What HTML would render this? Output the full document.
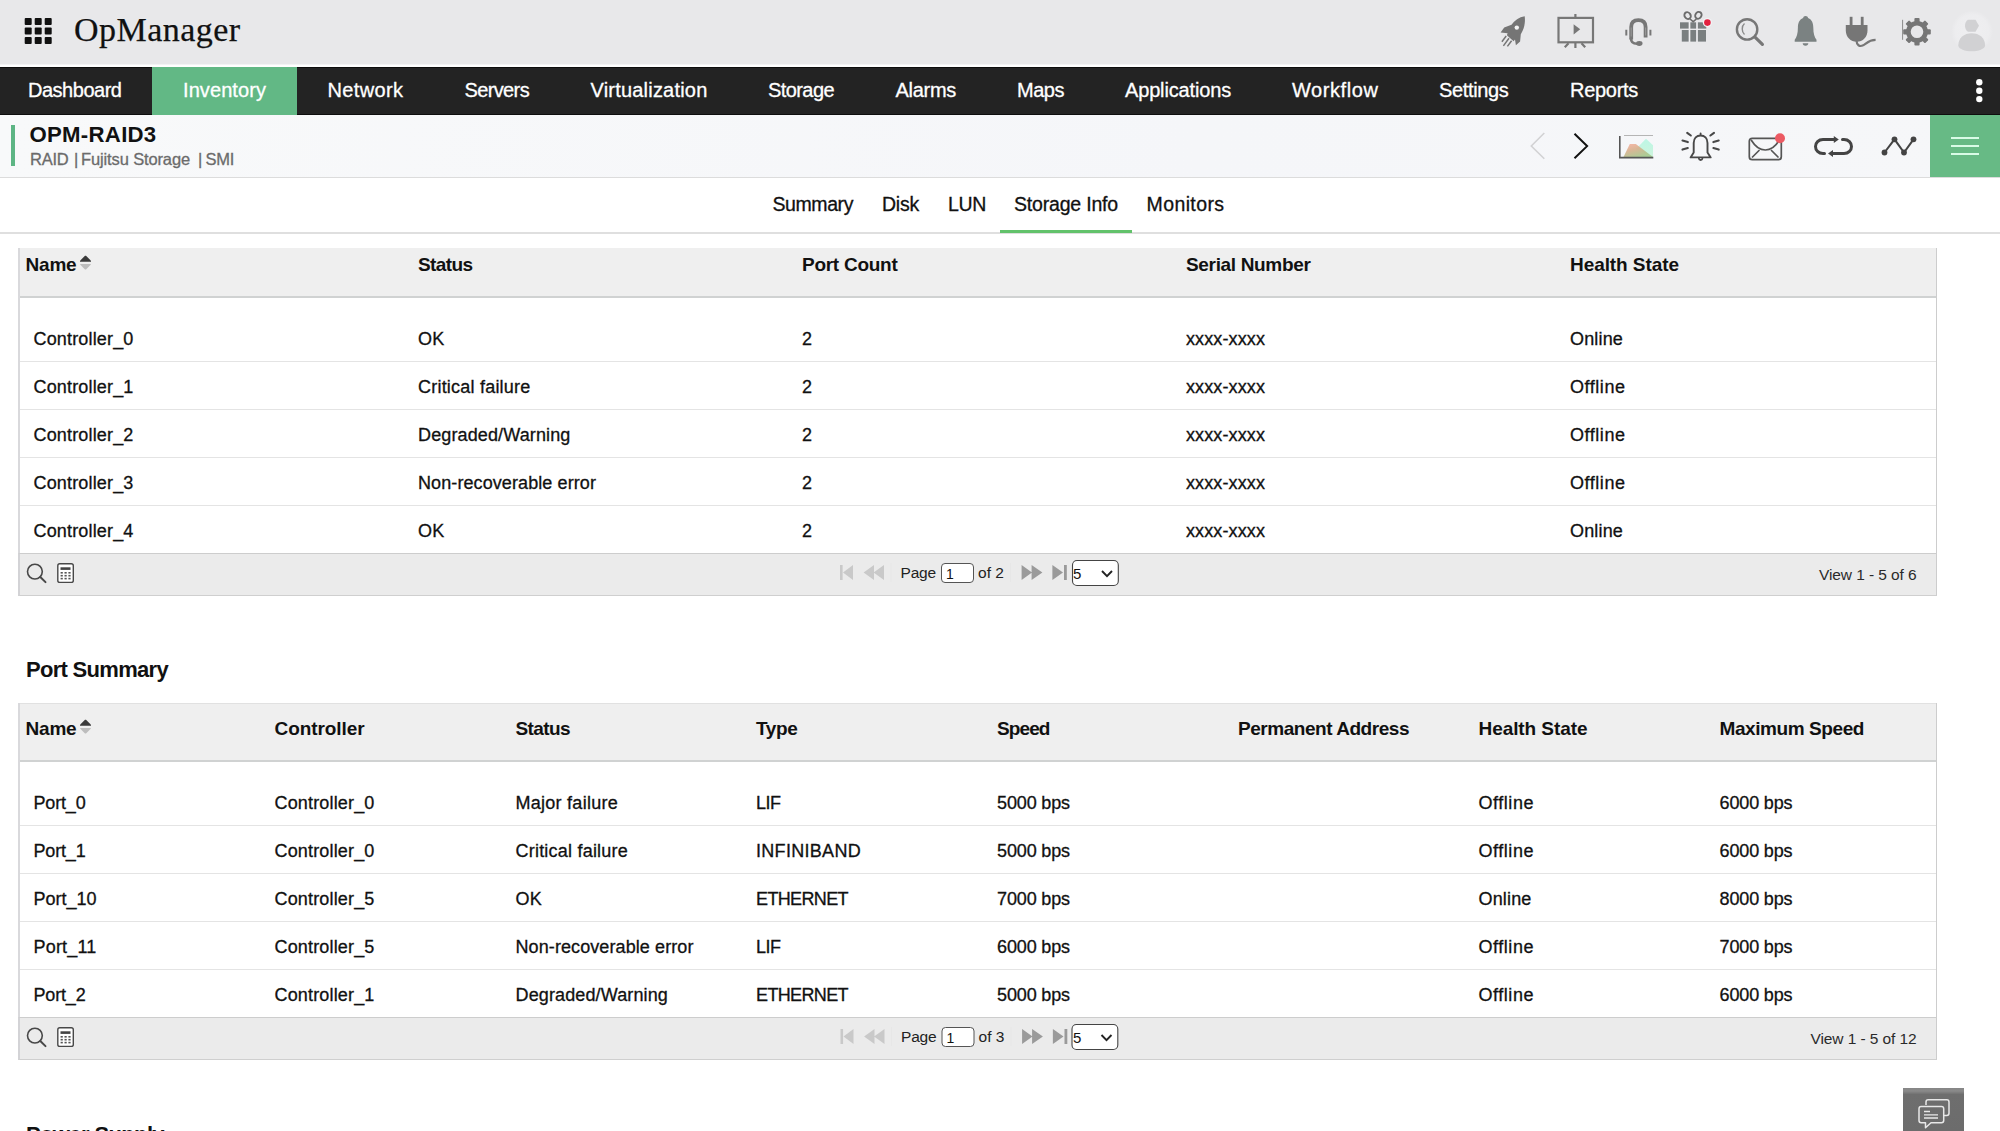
<!DOCTYPE html>
<html lang="en"><head><meta charset="utf-8"><title>OpManager</title>
<style>
*{box-sizing:border-box;margin:0;padding:0}
html,body{width:2000px;height:1131px;overflow:hidden;background:#fff;font-family:"Liberation Sans",sans-serif}
.a{position:absolute}
.t{position:absolute;white-space:nowrap;display:block}
svg{position:absolute;overflow:visible}
#topbar{left:0;top:0;width:2000px;height:67px;background:linear-gradient(#e8e8ea 0,#e8e8ea 64px,#f4f4f5 64.500px,#fff 65px,#fff 67px)}
#nav{left:0;top:67px;width:2000px;height:47.800px;background:#232323;border-top:1.200px solid #0e0e0e;border-bottom:1.200px solid #0e0e0e}
#navsel{left:152px;top:67px;width:145px;height:47.800px;background:#62b885}
#sub{left:0;top:115px;width:2000px;height:62px;background:linear-gradient(90deg,#f8f9fa,#f5f6f9 60%,#f6f7f9)}
#subline{left:0;top:177px;width:2000px;height:1px;background:#dcdcdc}
#gbar{left:11px;top:125px;width:4px;height:41px;background:#5db584}
#menu{left:1930px;top:115px;width:70px;height:62px;background:#67ba85}
.hl{left:1951px;width:28px;height:2px;background:#d9fbe6}
#tabline{left:0;top:232px;width:2000px;height:2px;background:#dfdfdf}
#tabsel{left:1000px;top:230px;width:132px;height:3px;background:#62c26b}
.tbl{left:18px;width:1919px;border-left:2px solid #d9d9dc;border-right:1px solid #cdcdcd}
.th{left:20px;width:1916px;background:#efefef}
.thb{left:20px;width:1916px;height:2px;background:#d0d2d2}
.rl{left:20px;width:1916px;height:1px;background:#e4e4e4}
.ft{left:18px;width:1919px;height:43px;background:#ebebeb;border-top:1.5px solid #cdcdcd;border-bottom:1.5px solid #cfcfcf;border-left:2px solid #d3d3d6;border-right:1px solid #cdcdcd}
.pin{width:33px;height:19px;border:1px solid #555;border-radius:4px;background:#fff}
.psel{width:46px;height:26px;border:1px solid #444;border-radius:5px;background:#fff}
#chat{left:1903.200px;top:1088.300px;width:61.200px;height:43px;background:linear-gradient(#868686 0,#8a8a8a 3px,#6e6e6e 6.500px,#6c6c6c 100%)}

</style></head>
<body>
<div class="a" id="topbar"></div>
<div class="a" id="nav"></div>
<div class="a" id="navsel"></div>
<div class="a" id="sub"></div>
<div class="a" id="subline"></div>
<div class="a" id="gbar"></div>
<div class="a" id="menu"></div>
<div class="a hl" style="top:137px"></div><div class="a hl" style="top:145px"></div><div class="a hl" style="top:153px"></div>
<div class="a" id="tabline"></div>
<div class="a" id="tabsel"></div>
<!-- table 1 -->
<div class="a tbl" style="top:248px;height:306px"></div>
<div class="a th" style="top:248px;height:48px"></div>
<div class="a thb" style="top:296px"></div>
<div class="a rl" style="top:361px"></div><div class="a rl" style="top:409px"></div><div class="a rl" style="top:457px"></div><div class="a rl" style="top:505px"></div>
<div class="a ft" style="top:553px"></div>
<!-- table 2 -->
<div class="a tbl" style="top:703px;height:315px"></div>
<div class="a th" style="top:703px;height:57px;border-top:1.500px solid #e1e1e1"></div>
<div class="a thb" style="top:760px"></div>
<div class="a rl" style="top:825px"></div><div class="a rl" style="top:873px"></div><div class="a rl" style="top:921px"></div><div class="a rl" style="top:969px"></div>
<div class="a ft" style="top:1017px"></div>
<div class="a" id="chat"></div>
<svg class="a" style="left:0;top:0" width="2000" height="1131" viewBox="0 0 2000 1131" fill="none">
<defs>
<linearGradient id="gr" x1="0" y1="0" x2="0.6" y2="1"><stop offset="0" stop-color="#f9b3a4"/><stop offset="0.45" stop-color="#d9b08e"/><stop offset="1" stop-color="#a3c98c"/></linearGradient>
<linearGradient id="gg" x1="0" y1="0" x2="0" y2="1"><stop offset="0" stop-color="#aef6e0"/><stop offset="1" stop-color="#c4f3d6"/></linearGradient>
<radialGradient id="avg"><stop offset="0" stop-color="#efeff1"/><stop offset="0.8" stop-color="#ededef"/><stop offset="1" stop-color="#e8e8ea"/></radialGradient>
</defs>
<!-- app grid -->
<g fill="#111">
<rect x="24.7" y="18" width="7" height="7" rx="1"/><rect x="34.7" y="18" width="7" height="7" rx="1"/><rect x="44.7" y="18" width="7" height="7" rx="1"/>
<rect x="24.7" y="27.5" width="7" height="7" rx="1"/><rect x="34.7" y="27.5" width="7" height="7" rx="1"/><rect x="44.7" y="27.5" width="7" height="7" rx="1"/>
<rect x="24.7" y="37" width="7" height="7" rx="1"/><rect x="34.7" y="37" width="7" height="7" rx="1"/><rect x="44.7" y="37" width="7" height="7" rx="1"/>
</g>
<!-- rocket -->
<path d="M1524.700 16.300C1519 17.300 1514.500 20.300 1511.500 24.800L1504.200 27.600 1500.600 32.600 1507.600 33.300 1506.900 35.200 1513.600 41.200 1515 39.600 1515.900 45.200 1520.100 41.500 1520.800 34.200C1524 29.500 1525.600 23 1524.700 16.300z" fill="#757575"/>
<path d="M1506.200 36l-4.300 5.800M1509 38.300l-5.600 7.600M1511.600 40.800l-4.200 5.600" stroke="#757575" stroke-width="1.500"/>
<circle cx="1516.800" cy="27.600" r="2.200" fill="#f4f4f4"/>
<!-- monitor -->
<g stroke="#777" stroke-width="2.200">
<rect x="1558.500" y="17.900" width="34.500" height="24.400"/>
<path d="M1575.400 14v4M1575.400 43v5M1568.500 43.200l-3.700 4M1581.500 43.200l3.700 4"/>
</g>
<path d="M1573.600 24.200v10.200l6.600-5.100z" fill="#777"/>
<!-- headset -->
<path d="M1631.200 39.500V27c0-5 2.800-6.900 7.200-6.900s7.200 1.900 7.200 6.900v10.600" stroke="#777" stroke-width="3.800"/>
<path d="M1631.200 27.500v9M1645.600 27.500v8" stroke="#9a9a9a" stroke-width="1"/>
<path d="M1631 38.500c0 3.600 2.400 5.200 6 5.200" stroke="#777" stroke-width="2.600"/>
<path d="M1626.300 29.700v5.800M1650.400 29.700v5.800" stroke="#777" stroke-width="2"/>
<ellipse cx="1639.300" cy="43.500" rx="3.200" ry="2.400" fill="#777"/>
<!-- gift -->
<g fill="#7a7f80">
<rect x="1680" y="22.300" width="26.300" height="6.300"/>
<rect x="1681.800" y="30" width="24.200" height="11.600"/>
</g>
<path d="M1689.500 22v20M1697 22v20" stroke="#efeff1" stroke-width="1.700"/>
<ellipse cx="1687.600" cy="15.600" rx="3" ry="3.600" stroke="#6c6c6c" stroke-width="1.900" transform="rotate(-35 1687.600 15.600)"/>
<ellipse cx="1698.400" cy="15.300" rx="3" ry="3.600" stroke="#6c6c6c" stroke-width="1.900" transform="rotate(35 1698.400 15.300)"/>
<path d="M1690 19l3.200 2.600 3.200-2.600" stroke="#6c6c6c" stroke-width="1.600"/>
<circle cx="1707.400" cy="22.600" r="4.600" fill="#f3f3f5"/>
<circle cx="1707.400" cy="22.600" r="3.300" fill="#e3213f"/>
<!-- search -->
<circle cx="1747.100" cy="29.400" r="10.200" stroke="#777" stroke-width="2.400"/>
<path d="M1755 37.200l7.400 7.200" stroke="#777" stroke-width="3.200" stroke-linecap="round"/>
<path d="M1744.500 23.500c-3 2.500-3 8.500 0 11" stroke="#8a8a8a" stroke-width="1.400"/>
<!-- bell -->
<path d="M1805.500 16c-1.300 0-2.200.9-2.400 2-4 1.600-5.200 5.500-5.200 9.500 0 6-1.300 10-3.200 12.300v1.900h21.800v-1.900c-1.900-2.300-3.200-6.300-3.200-12.300 0-4-1.200-7.900-5.200-9.500-.2-1.100-1.100-2-2.600-2z" fill="#7b8282"/>
<path d="M1802.700 43.300a2.800 2.400 0 0 0 5.600 0z" fill="#7b8282"/>
<!-- plug -->
<g fill="#767676">
<rect x="1849.700" y="16.800" width="2.800" height="9"/><rect x="1860.800" y="16.800" width="2.800" height="9"/>
<path d="M1845.800 25h21.700v5.500c0 6.500-4.700 11.300-10.800 11.300s-10.900-4.800-10.900-11.300z"/>
</g>
<path d="M1856.600 41c0 4 3 5.800 6 4.600 3.500-1.400 5.500-5.700 13-5.700" stroke="#767676" stroke-width="2.200"/>
<!-- gear -->
<path d="M1902.600 19.800v20" stroke="#8b8b8b" stroke-width="1"/>
<g transform="translate(1917 31.800)">
<circle r="8.600" stroke="#767676" stroke-width="4.600"/>
<g fill="#767676">
<rect x="-2.600" y="-13.800" width="5.200" height="5" rx="1"/>
<rect x="-2.600" y="-13.800" width="5.200" height="5" rx="1" transform="rotate(45)"/>
<rect x="-2.600" y="-13.800" width="5.200" height="5" rx="1" transform="rotate(90)"/>
<rect x="-2.600" y="-13.800" width="5.200" height="5" rx="1" transform="rotate(135)"/>
<rect x="-2.600" y="-13.800" width="5.200" height="5" rx="1" transform="rotate(180)"/>
<rect x="-2.600" y="-13.800" width="5.200" height="5" rx="1" transform="rotate(225)"/>
<rect x="-2.600" y="-13.800" width="5.200" height="5" rx="1" transform="rotate(270)"/>
<rect x="-2.600" y="-13.800" width="5.200" height="5" rx="1" transform="rotate(315)"/>
</g></g>
<!-- avatar -->
<circle cx="1972" cy="31.500" r="21" fill="url(#avg)"/>
<path d="M1968 19.800h7.500l3.500 6-3.500 6h-7.500c-2-1.200-3-3.500-3-6s1-4.800 3-6z" fill="#d1d1d3"/>
<path d="M1958.300 45.500c0-7.500 5.700-12.200 13.400-12.200s13.400 4.700 13.400 12.200c0 3.500-7 5.800-13.400 5.800s-13.400-2.300-13.400-5.800z" fill="#d1d1d3"/>
<!-- kebab -->
<g fill="#fff"><circle cx="1979.300" cy="82.300" r="3.200"/><circle cx="1979.300" cy="90.700" r="3.200"/><circle cx="1979.300" cy="99.100" r="3.200"/></g>
<!-- chevrons -->
<path d="M1544.300 133l-13 13 13 12.800" stroke="#d2d2d4" stroke-width="1.600"/>
<path d="M1574.500 133.800l12.600 12.300-12.600 12.200" stroke="#111" stroke-width="2"/>
<!-- chart -->
<path d="M1636 149l10-10.200 7 6.500v11.700z" fill="url(#gg)" opacity=".8"/>
<path d="M1623.500 157l6.300-13h6l17.200 13z" fill="url(#gr)" opacity=".92"/>
<path d="M1624 135.500h29" stroke="#b5b5b5" stroke-width="1"/>
<path d="M1619.800 136v21.600h33.500" stroke="#555" stroke-width="1.600"/>
<!-- alarm bell -->
<g stroke="#484848" stroke-width="1.900" stroke-linecap="round" stroke-linejoin="round">
<path d="M1690.600 157.400l3.100-5V143c0-4.700 3-7.500 6.900-7.500s6.900 2.800 6.900 7.500v9.400l3.200 5zM1700.600 133.400v2.100"/>
<path d="M1698.900 158.600a1.800 1.800 0 0 0 3.500 0"/>
<path d="M1687.200 132.800l3.600 2.700M1682.500 140.500l5.300 1.600M1682.500 149.600l5.300-1.600M1714 132.800l-3.600 2.700M1718.700 140.500l-5.300 1.600M1718.700 149.600l-5.300-1.600" stroke-width="2.100"/>
</g>
<!-- envelope -->
<g stroke="#555" stroke-width="1.700" stroke-linecap="round">
<rect x="1749.300" y="138.300" width="32" height="21.400" rx="3"/>
<path d="M1751.500 140.500c4 6.500 9 9.500 13.800 9.500s9.800-3 13.800-9.500M1752.500 157l6.500-6.500M1778 157l-6.500-6.500"/>
</g>
<circle cx="1780" cy="138.200" r="5" fill="#ec5a63"/>
<!-- loop -->
<g stroke="#444" stroke-width="3" stroke-linecap="round">
<path d="M1824.500 153.500h-1.500c-4.500 0-7.500-3.200-7.500-7s3-7 7.500-7h12"/>
<path d="M1842.500 139.500h1.500c4.500 0 7.500 3.200 7.500 7s-3 7-7.500 7h-12"/>
</g>
<path d="M1833.800 136l5 3.500-5 3.500zM1833 150l-5 3.500 5 3.500z" fill="#444"/>
<!-- graph -->
<path d="M1884.500 152.500l10-13.200 9.500 13.200 9.500-13.200" stroke="#444" stroke-width="2"/>
<g fill="#444"><circle cx="1884.500" cy="152.500" r="2.900"/><circle cx="1894.500" cy="139.300" r="2.900"/><circle cx="1904" cy="152.500" r="2.900"/><circle cx="1913.500" cy="139.300" r="2.900"/></g>
<!-- sort icons -->
<g id="sorti"><path d="M85 255.800h1l5 5v.900h-11v-.900z" fill="#3a3a3a"/><path d="M80.300 264h10.400v.800l-4.700 4.700h-1l-4.700-4.700z" fill="#bdbdbd"/></g><!--/sorti-->
<g transform="translate(0 464)"><path d="M85 255.800h1l5 5v.900h-11v-.900z" fill="#3a3a3a"/><path d="M80.300 264h10.400v.800l-4.700 4.700h-1l-4.700-4.700z" fill="#bdbdbd"/></g>
<!-- footer icons -->
<g id="fti">
<circle cx="34.900" cy="571.600" r="7.400" stroke="#484848" stroke-width="1.600"/>
<path d="M40.300 577l5.200 5.100" stroke="#484848" stroke-width="2" stroke-linecap="round"/>
<rect x="57.800" y="563.800" width="15.500" height="18.600" rx="2" fill="#fff" stroke="#484848" stroke-width="1.400"/>
<rect x="60.500" y="567.300" width="10" height="2.600" fill="#444"/>
<g fill="#555"><rect x="60.600" y="572" width="2.200" height="1.600"/><rect x="64.500" y="572" width="2.200" height="1.600"/><rect x="68.400" y="572" width="2.200" height="1.600"/>
<rect x="60.600" y="574.900" width="2.200" height="1.600"/><rect x="64.500" y="574.900" width="2.200" height="1.600"/><rect x="68.400" y="574.900" width="2.200" height="1.600"/>
<rect x="60.600" y="577.800" width="2.200" height="1.600"/><rect x="64.500" y="577.800" width="2.200" height="1.600"/><rect x="68.400" y="577.800" width="2.200" height="1.600"/></g>
</g><!--/fti-->
<g transform="translate(0 464)">
<circle cx="34.900" cy="571.600" r="7.400" stroke="#484848" stroke-width="1.600"/>
<path d="M40.300 577l5.200 5.100" stroke="#484848" stroke-width="2" stroke-linecap="round"/>
<rect x="57.800" y="563.800" width="15.500" height="18.600" rx="2" fill="#fff" stroke="#484848" stroke-width="1.400"/>
<rect x="60.500" y="567.300" width="10" height="2.600" fill="#444"/>
<g fill="#555"><rect x="60.600" y="572" width="2.200" height="1.600"/><rect x="64.500" y="572" width="2.200" height="1.600"/><rect x="68.400" y="572" width="2.200" height="1.600"/>
<rect x="60.600" y="574.900" width="2.200" height="1.600"/><rect x="64.500" y="574.900" width="2.200" height="1.600"/><rect x="68.400" y="574.900" width="2.200" height="1.600"/>
<rect x="60.600" y="577.800" width="2.200" height="1.600"/><rect x="64.500" y="577.800" width="2.200" height="1.600"/><rect x="68.400" y="577.800" width="2.200" height="1.600"/></g>
</g>
<g id="pgi">
<g fill="#c9c9c9"><rect x="840" y="565" width="2.600" height="15"/><path d="M853 565v15l-10-7.500z"/><path d="M874 565v15l-10.400-7.500zM884 565v15l-10.400-7.500z"/></g>
<g fill="#9a9a9a"><path d="M1021.600 565v15l10.400-7.500zM1031.600 565v15l10.800-7.500z"/><path d="M1052.400 565v15l10.600-7.500z"/><rect x="1064" y="565" width="2.800" height="15"/></g>
<path d="M891 563v19M1010.500 563v19" stroke="#e7e7e7" stroke-width="1"/>
<rect x="941.500" y="563.500" width="32" height="19" rx="3.500" fill="#fff" stroke="#555" stroke-width="1"/>
</g><!--/pgi-->
<g transform="translate(0.500 464)">
<g fill="#c9c9c9"><rect x="840" y="565" width="2.600" height="15"/><path d="M853 565v15l-10-7.500z"/><path d="M874 565v15l-10.400-7.500zM884 565v15l-10.400-7.500z"/></g>
<g fill="#9a9a9a"><path d="M1021.600 565v15l10.400-7.500zM1031.600 565v15l10.800-7.500z"/><path d="M1052.400 565v15l10.600-7.500z"/><rect x="1064" y="565" width="2.800" height="15"/></g>
<path d="M891 563v19M1010.500 563v19" stroke="#e7e7e7" stroke-width="1"/>
<rect x="941.500" y="563.500" width="32" height="19" rx="3.500" fill="#fff" stroke="#555" stroke-width="1"/>
</g>
<g id="pgs"><rect x="1072.500" y="560.500" width="45.800" height="25" rx="4.500" fill="#fff" stroke="#444" stroke-width="1.100"/>
<path d="M1102 571l5 5.200 5-5.200" stroke="#222" stroke-width="1.900"/></g><!--/pgs-->
<g transform="translate(-0.500 464)"><rect x="1072.500" y="560.500" width="45.800" height="25" rx="4.500" fill="#fff" stroke="#444" stroke-width="1.100"/>
<path d="M1102 571l5 5.200 5-5.200" stroke="#222" stroke-width="1.900"/></g>
<!-- chat -->
<g stroke="#e8e8e8" stroke-width="1.500" stroke-linejoin="round">
<path d="M1926 1105v-3c0-1.300.9-2.200 2.200-2.200h18.600c1.300 0 2.200.9 2.200 2.200v11.300c0 1.300-.9 2.200-2.200 2.200h-3"/>
<path d="M1921.200 1106.500h20.300c1.300 0 2.200.9 2.200 2.200v11.800c0 1.300-.9 2.200-2.200 2.200h-10.500l-5.500 5v-5h-4.300c-1.300 0-2.200-.9-2.200-2.200v-11.800c0-1.300.9-2.200 2.200-2.200z"/>
<path d="M1924 1111.500h6M1924 1114.800h14M1924 1118h14" stroke-width="1.300"/>
</g>
</svg>


<span class="t" style="left:74px;top:13.02px;font:400 34px/34px 'Liberation Serif',serif;color:#111;-webkit-text-stroke:0.25px #111;letter-spacing:0.457px">OpManager</span>
<span class="t" style="left:28px;top:79.67px;font:400 20px/20px 'Liberation Sans',sans-serif;color:#fff;-webkit-text-stroke:0.3px #fff;letter-spacing:-0.483px">Dashboard</span>
<span class="t" style="left:183px;top:79.67px;font:400 20px/20px 'Liberation Sans',sans-serif;color:#fff;-webkit-text-stroke:0.3px #fff;letter-spacing:0.082px">Inventory</span>
<span class="t" style="left:327.5px;top:79.67px;font:400 20px/20px 'Liberation Sans',sans-serif;color:#fff;-webkit-text-stroke:0.3px #fff;letter-spacing:0.377px">Network</span>
<span class="t" style="left:464.5px;top:79.67px;font:400 20px/20px 'Liberation Sans',sans-serif;color:#fff;-webkit-text-stroke:0.3px #fff;letter-spacing:-0.629px">Servers</span>
<span class="t" style="left:590.5px;top:79.67px;font:400 20px/20px 'Liberation Sans',sans-serif;color:#fff;-webkit-text-stroke:0.3px #fff;letter-spacing:0.204px">Virtualization</span>
<span class="t" style="left:768px;top:79.67px;font:400 20px/20px 'Liberation Sans',sans-serif;color:#fff;-webkit-text-stroke:0.3px #fff;letter-spacing:-0.580px">Storage</span>
<span class="t" style="left:895.5px;top:79.67px;font:400 20px/20px 'Liberation Sans',sans-serif;color:#fff;-webkit-text-stroke:0.3px #fff;letter-spacing:-0.289px">Alarms</span>
<span class="t" style="left:1017px;top:79.67px;font:400 20px/20px 'Liberation Sans',sans-serif;color:#fff;-webkit-text-stroke:0.3px #fff;letter-spacing:-0.477px">Maps</span>
<span class="t" style="left:1125px;top:79.67px;font:400 20px/20px 'Liberation Sans',sans-serif;color:#fff;-webkit-text-stroke:0.3px #fff;letter-spacing:-0.154px">Applications</span>
<span class="t" style="left:1292px;top:79.67px;font:400 20px/20px 'Liberation Sans',sans-serif;color:#fff;-webkit-text-stroke:0.3px #fff;letter-spacing:0.578px">Workflow</span>
<span class="t" style="left:1439px;top:79.67px;font:400 20px/20px 'Liberation Sans',sans-serif;color:#fff;-webkit-text-stroke:0.3px #fff;letter-spacing:-0.346px">Settings</span>
<span class="t" style="left:1570px;top:79.67px;font:400 20px/20px 'Liberation Sans',sans-serif;color:#fff;-webkit-text-stroke:0.3px #fff;letter-spacing:-0.290px">Reports</span>
<span class="t" style="left:29.5px;top:124.21px;font:700 22.2px/22.2px 'Liberation Sans',sans-serif;color:#111;letter-spacing:0.276px">OPM-RAID3</span>
<span class="t" style="left:30px;top:150.63px;font:400 16.5px/16.5px 'Liberation Sans',sans-serif;color:#6b6b6b;-webkit-text-stroke:0.3px #6b6b6b;letter-spacing:-0.230px">RAID</span>
<span class="t" style="left:74px;top:150.63px;font:400 16.5px/16.5px 'Liberation Sans',sans-serif;color:#6b6b6b;-webkit-text-stroke:0.3px #6b6b6b">|</span>
<span class="t" style="left:81px;top:150.63px;font:400 16.5px/16.5px 'Liberation Sans',sans-serif;color:#6b6b6b;-webkit-text-stroke:0.3px #6b6b6b;letter-spacing:-0.132px">Fujitsu Storage</span>
<span class="t" style="left:198px;top:150.63px;font:400 16.5px/16.5px 'Liberation Sans',sans-serif;color:#6b6b6b;-webkit-text-stroke:0.3px #6b6b6b">|</span>
<span class="t" style="left:205.5px;top:150.63px;font:400 16.5px/16.5px 'Liberation Sans',sans-serif;color:#6b6b6b;-webkit-text-stroke:0.3px #6b6b6b;letter-spacing:-0.281px">SMI</span>
<span class="t" style="left:772.5px;top:195.49px;font:400 19.5px/19.5px 'Liberation Sans',sans-serif;color:#111;-webkit-text-stroke:0.3px #111;letter-spacing:-0.420px">Summary</span>
<span class="t" style="left:882px;top:195.49px;font:400 19.5px/19.5px 'Liberation Sans',sans-serif;color:#111;-webkit-text-stroke:0.3px #111;letter-spacing:-0.230px">Disk</span>
<span class="t" style="left:948px;top:195.49px;font:400 19.5px/19.5px 'Liberation Sans',sans-serif;color:#111;-webkit-text-stroke:0.3px #111;letter-spacing:-0.339px">LUN</span>
<span class="t" style="left:1014px;top:195.49px;font:400 19.5px/19.5px 'Liberation Sans',sans-serif;color:#111;-webkit-text-stroke:0.3px #111;letter-spacing:-0.188px">Storage Info</span>
<span class="t" style="left:1146.5px;top:195.49px;font:400 19.5px/19.5px 'Liberation Sans',sans-serif;color:#111;-webkit-text-stroke:0.3px #111;letter-spacing:0.402px">Monitors</span>
<span class="t" style="left:25.5px;top:254.52px;font:700 19px/19px 'Liberation Sans',sans-serif;color:#111;letter-spacing:-0.188px">Name</span>
<span class="t" style="left:418px;top:254.52px;font:700 19px/19px 'Liberation Sans',sans-serif;color:#111;letter-spacing:-0.596px">Status</span>
<span class="t" style="left:802px;top:254.52px;font:700 19px/19px 'Liberation Sans',sans-serif;color:#111;letter-spacing:-0.266px">Port Count</span>
<span class="t" style="left:1186px;top:254.52px;font:700 19px/19px 'Liberation Sans',sans-serif;color:#111;letter-spacing:-0.333px">Serial Number</span>
<span class="t" style="left:1570px;top:254.52px;font:700 19px/19px 'Liberation Sans',sans-serif;color:#111;letter-spacing:-0.068px">Health State</span>
<span class="t" style="left:33.5px;top:329.66px;font:400 18px/18px 'Liberation Sans',sans-serif;color:#111;-webkit-text-stroke:0.3px #111;letter-spacing:0.161px">Controller_0</span>
<span class="t" style="left:418px;top:329.66px;font:400 18px/18px 'Liberation Sans',sans-serif;color:#111;-webkit-text-stroke:0.3px #111;letter-spacing:0.242px">OK</span>
<span class="t" style="left:802px;top:329.66px;font:400 18px/18px 'Liberation Sans',sans-serif;color:#111;-webkit-text-stroke:0.3px #111">2</span>
<span class="t" style="left:1186px;top:329.66px;font:400 18px/18px 'Liberation Sans',sans-serif;color:#111;-webkit-text-stroke:0.3px #111;letter-spacing:0.111px">xxxx-xxxx</span>
<span class="t" style="left:1570px;top:329.66px;font:400 18px/18px 'Liberation Sans',sans-serif;color:#111;-webkit-text-stroke:0.3px #111;letter-spacing:0.161px">Online</span>
<span class="t" style="left:33.5px;top:377.66px;font:400 18px/18px 'Liberation Sans',sans-serif;color:#111;-webkit-text-stroke:0.3px #111;letter-spacing:0.161px">Controller_1</span>
<span class="t" style="left:418px;top:377.66px;font:400 18px/18px 'Liberation Sans',sans-serif;color:#111;-webkit-text-stroke:0.3px #111;letter-spacing:0.217px">Critical failure</span>
<span class="t" style="left:802px;top:377.66px;font:400 18px/18px 'Liberation Sans',sans-serif;color:#111;-webkit-text-stroke:0.3px #111">2</span>
<span class="t" style="left:1186px;top:377.66px;font:400 18px/18px 'Liberation Sans',sans-serif;color:#111;-webkit-text-stroke:0.3px #111;letter-spacing:0.111px">xxxx-xxxx</span>
<span class="t" style="left:1570px;top:377.66px;font:400 18px/18px 'Liberation Sans',sans-serif;color:#111;-webkit-text-stroke:0.3px #111;letter-spacing:0.542px">Offline</span>
<span class="t" style="left:33.5px;top:425.66px;font:400 18px/18px 'Liberation Sans',sans-serif;color:#111;-webkit-text-stroke:0.3px #111;letter-spacing:0.161px">Controller_2</span>
<span class="t" style="left:418px;top:425.66px;font:400 18px/18px 'Liberation Sans',sans-serif;color:#111;-webkit-text-stroke:0.3px #111;letter-spacing:0.130px">Degraded/Warning</span>
<span class="t" style="left:802px;top:425.66px;font:400 18px/18px 'Liberation Sans',sans-serif;color:#111;-webkit-text-stroke:0.3px #111">2</span>
<span class="t" style="left:1186px;top:425.66px;font:400 18px/18px 'Liberation Sans',sans-serif;color:#111;-webkit-text-stroke:0.3px #111;letter-spacing:0.111px">xxxx-xxxx</span>
<span class="t" style="left:1570px;top:425.66px;font:400 18px/18px 'Liberation Sans',sans-serif;color:#111;-webkit-text-stroke:0.3px #111;letter-spacing:0.542px">Offline</span>
<span class="t" style="left:33.5px;top:473.66px;font:400 18px/18px 'Liberation Sans',sans-serif;color:#111;-webkit-text-stroke:0.3px #111;letter-spacing:0.161px">Controller_3</span>
<span class="t" style="left:418px;top:473.66px;font:400 18px/18px 'Liberation Sans',sans-serif;color:#111;-webkit-text-stroke:0.3px #111;letter-spacing:0.092px">Non-recoverable error</span>
<span class="t" style="left:802px;top:473.66px;font:400 18px/18px 'Liberation Sans',sans-serif;color:#111;-webkit-text-stroke:0.3px #111">2</span>
<span class="t" style="left:1186px;top:473.66px;font:400 18px/18px 'Liberation Sans',sans-serif;color:#111;-webkit-text-stroke:0.3px #111;letter-spacing:0.111px">xxxx-xxxx</span>
<span class="t" style="left:1570px;top:473.66px;font:400 18px/18px 'Liberation Sans',sans-serif;color:#111;-webkit-text-stroke:0.3px #111;letter-spacing:0.542px">Offline</span>
<span class="t" style="left:33.5px;top:521.66px;font:400 18px/18px 'Liberation Sans',sans-serif;color:#111;-webkit-text-stroke:0.3px #111;letter-spacing:0.161px">Controller_4</span>
<span class="t" style="left:418px;top:521.66px;font:400 18px/18px 'Liberation Sans',sans-serif;color:#111;-webkit-text-stroke:0.3px #111;letter-spacing:0.242px">OK</span>
<span class="t" style="left:802px;top:521.66px;font:400 18px/18px 'Liberation Sans',sans-serif;color:#111;-webkit-text-stroke:0.3px #111">2</span>
<span class="t" style="left:1186px;top:521.66px;font:400 18px/18px 'Liberation Sans',sans-serif;color:#111;-webkit-text-stroke:0.3px #111;letter-spacing:0.111px">xxxx-xxxx</span>
<span class="t" style="left:1570px;top:521.66px;font:400 18px/18px 'Liberation Sans',sans-serif;color:#111;-webkit-text-stroke:0.3px #111;letter-spacing:0.161px">Online</span>
<span class="t" style="left:26px;top:659.18px;font:700 22px/22px 'Liberation Sans',sans-serif;color:#111;letter-spacing:-0.699px">Port Summary</span>
<span class="t" style="left:25.5px;top:718.52px;font:700 19px/19px 'Liberation Sans',sans-serif;color:#111;letter-spacing:-0.188px">Name</span>
<span class="t" style="left:274.5px;top:718.52px;font:700 19px/19px 'Liberation Sans',sans-serif;color:#111;letter-spacing:-0.078px">Controller</span>
<span class="t" style="left:515.5px;top:718.52px;font:700 19px/19px 'Liberation Sans',sans-serif;color:#111;letter-spacing:-0.596px">Status</span>
<span class="t" style="left:756px;top:718.52px;font:700 19px/19px 'Liberation Sans',sans-serif;color:#111;letter-spacing:-0.359px">Type</span>
<span class="t" style="left:997px;top:718.52px;font:700 19px/19px 'Liberation Sans',sans-serif;color:#111;letter-spacing:-0.906px">Speed</span>
<span class="t" style="left:1238px;top:718.52px;font:700 19px/19px 'Liberation Sans',sans-serif;color:#111;letter-spacing:-0.460px">Permanent Address</span>
<span class="t" style="left:1478.5px;top:718.52px;font:700 19px/19px 'Liberation Sans',sans-serif;color:#111;letter-spacing:-0.068px">Health State</span>
<span class="t" style="left:1719.5px;top:718.52px;font:700 19px/19px 'Liberation Sans',sans-serif;color:#111;letter-spacing:-0.418px">Maximum Speed</span>
<span class="t" style="left:33.5px;top:793.66px;font:400 18px/18px 'Liberation Sans',sans-serif;color:#111;-webkit-text-stroke:0.3px #111;letter-spacing:-0.174px">Port_0</span>
<span class="t" style="left:274.5px;top:793.66px;font:400 18px/18px 'Liberation Sans',sans-serif;color:#111;-webkit-text-stroke:0.3px #111;letter-spacing:0.161px">Controller_0</span>
<span class="t" style="left:515.5px;top:793.66px;font:400 18px/18px 'Liberation Sans',sans-serif;color:#111;-webkit-text-stroke:0.3px #111;letter-spacing:0.266px">Major failure</span>
<span class="t" style="left:756px;top:793.66px;font:400 18px/18px 'Liberation Sans',sans-serif;color:#111;-webkit-text-stroke:0.3px #111;letter-spacing:-0.505px">LIF</span>
<span class="t" style="left:997px;top:793.66px;font:400 18px/18px 'Liberation Sans',sans-serif;color:#111;-webkit-text-stroke:0.3px #111;letter-spacing:-0.135px">5000 bps</span>
<span class="t" style="left:1478.5px;top:793.66px;font:400 18px/18px 'Liberation Sans',sans-serif;color:#111;-webkit-text-stroke:0.3px #111;letter-spacing:0.542px">Offline</span>
<span class="t" style="left:1719.5px;top:793.66px;font:400 18px/18px 'Liberation Sans',sans-serif;color:#111;-webkit-text-stroke:0.3px #111;letter-spacing:-0.135px">6000 bps</span>
<span class="t" style="left:33.5px;top:841.66px;font:400 18px/18px 'Liberation Sans',sans-serif;color:#111;-webkit-text-stroke:0.3px #111;letter-spacing:-0.174px">Port_1</span>
<span class="t" style="left:274.5px;top:841.66px;font:400 18px/18px 'Liberation Sans',sans-serif;color:#111;-webkit-text-stroke:0.3px #111;letter-spacing:0.161px">Controller_0</span>
<span class="t" style="left:515.5px;top:841.66px;font:400 18px/18px 'Liberation Sans',sans-serif;color:#111;-webkit-text-stroke:0.3px #111;letter-spacing:0.217px">Critical failure</span>
<span class="t" style="left:756px;top:841.66px;font:400 18px/18px 'Liberation Sans',sans-serif;color:#111;-webkit-text-stroke:0.3px #111;letter-spacing:0.298px">INFINIBAND</span>
<span class="t" style="left:997px;top:841.66px;font:400 18px/18px 'Liberation Sans',sans-serif;color:#111;-webkit-text-stroke:0.3px #111;letter-spacing:-0.135px">5000 bps</span>
<span class="t" style="left:1478.5px;top:841.66px;font:400 18px/18px 'Liberation Sans',sans-serif;color:#111;-webkit-text-stroke:0.3px #111;letter-spacing:0.542px">Offline</span>
<span class="t" style="left:1719.5px;top:841.66px;font:400 18px/18px 'Liberation Sans',sans-serif;color:#111;-webkit-text-stroke:0.3px #111;letter-spacing:-0.135px">6000 bps</span>
<span class="t" style="left:33.5px;top:889.66px;font:400 18px/18px 'Liberation Sans',sans-serif;color:#111;-webkit-text-stroke:0.3px #111;letter-spacing:-0.007px">Port_10</span>
<span class="t" style="left:274.5px;top:889.66px;font:400 18px/18px 'Liberation Sans',sans-serif;color:#111;-webkit-text-stroke:0.3px #111;letter-spacing:0.161px">Controller_5</span>
<span class="t" style="left:515.5px;top:889.66px;font:400 18px/18px 'Liberation Sans',sans-serif;color:#111;-webkit-text-stroke:0.3px #111;letter-spacing:0.242px">OK</span>
<span class="t" style="left:756px;top:889.66px;font:400 18px/18px 'Liberation Sans',sans-serif;color:#111;-webkit-text-stroke:0.3px #111;letter-spacing:-0.627px">ETHERNET</span>
<span class="t" style="left:997px;top:889.66px;font:400 18px/18px 'Liberation Sans',sans-serif;color:#111;-webkit-text-stroke:0.3px #111;letter-spacing:-0.135px">7000 bps</span>
<span class="t" style="left:1478.5px;top:889.66px;font:400 18px/18px 'Liberation Sans',sans-serif;color:#111;-webkit-text-stroke:0.3px #111;letter-spacing:0.161px">Online</span>
<span class="t" style="left:1719.5px;top:889.66px;font:400 18px/18px 'Liberation Sans',sans-serif;color:#111;-webkit-text-stroke:0.3px #111;letter-spacing:-0.135px">8000 bps</span>
<span class="t" style="left:33.5px;top:937.66px;font:400 18px/18px 'Liberation Sans',sans-serif;color:#111;-webkit-text-stroke:0.3px #111;letter-spacing:0.183px">Port_11</span>
<span class="t" style="left:274.5px;top:937.66px;font:400 18px/18px 'Liberation Sans',sans-serif;color:#111;-webkit-text-stroke:0.3px #111;letter-spacing:0.161px">Controller_5</span>
<span class="t" style="left:515.5px;top:937.66px;font:400 18px/18px 'Liberation Sans',sans-serif;color:#111;-webkit-text-stroke:0.3px #111;letter-spacing:0.092px">Non-recoverable error</span>
<span class="t" style="left:756px;top:937.66px;font:400 18px/18px 'Liberation Sans',sans-serif;color:#111;-webkit-text-stroke:0.3px #111;letter-spacing:-0.505px">LIF</span>
<span class="t" style="left:997px;top:937.66px;font:400 18px/18px 'Liberation Sans',sans-serif;color:#111;-webkit-text-stroke:0.3px #111;letter-spacing:-0.135px">6000 bps</span>
<span class="t" style="left:1478.5px;top:937.66px;font:400 18px/18px 'Liberation Sans',sans-serif;color:#111;-webkit-text-stroke:0.3px #111;letter-spacing:0.542px">Offline</span>
<span class="t" style="left:1719.5px;top:937.66px;font:400 18px/18px 'Liberation Sans',sans-serif;color:#111;-webkit-text-stroke:0.3px #111;letter-spacing:-0.135px">7000 bps</span>
<span class="t" style="left:33.5px;top:985.66px;font:400 18px/18px 'Liberation Sans',sans-serif;color:#111;-webkit-text-stroke:0.3px #111;letter-spacing:-0.174px">Port_2</span>
<span class="t" style="left:274.5px;top:985.66px;font:400 18px/18px 'Liberation Sans',sans-serif;color:#111;-webkit-text-stroke:0.3px #111;letter-spacing:0.161px">Controller_1</span>
<span class="t" style="left:515.5px;top:985.66px;font:400 18px/18px 'Liberation Sans',sans-serif;color:#111;-webkit-text-stroke:0.3px #111;letter-spacing:0.130px">Degraded/Warning</span>
<span class="t" style="left:756px;top:985.66px;font:400 18px/18px 'Liberation Sans',sans-serif;color:#111;-webkit-text-stroke:0.3px #111;letter-spacing:-0.627px">ETHERNET</span>
<span class="t" style="left:997px;top:985.66px;font:400 18px/18px 'Liberation Sans',sans-serif;color:#111;-webkit-text-stroke:0.3px #111;letter-spacing:-0.135px">5000 bps</span>
<span class="t" style="left:1478.5px;top:985.66px;font:400 18px/18px 'Liberation Sans',sans-serif;color:#111;-webkit-text-stroke:0.3px #111;letter-spacing:0.542px">Offline</span>
<span class="t" style="left:1719.5px;top:985.66px;font:400 18px/18px 'Liberation Sans',sans-serif;color:#111;-webkit-text-stroke:0.3px #111;letter-spacing:-0.135px">6000 bps</span>
<span class="t" style="left:26px;top:1123.98px;font:700 22px/22px 'Liberation Sans',sans-serif;color:#111;letter-spacing:-0.624px">Power Supply</span>
<span class="t" style="left:900.5px;top:564.88px;font:400 15.5px/15.5px 'Liberation Sans',sans-serif;color:#222;letter-spacing:-0.176px">Page</span>
<span class="t" style="left:978px;top:564.88px;font:400 15.5px/15.5px 'Liberation Sans',sans-serif;color:#222;letter-spacing:0.035px">of 2</span>
<span class="t" style="left:1819px;top:567.08px;font:400 15.5px/15.5px 'Liberation Sans',sans-serif;color:#2a2a2a;letter-spacing:-0.087px">View 1 - 5 of 6</span>
<span class="t" style="left:946px;top:567.15px;font:400 14px/14px 'Liberation Sans',sans-serif;color:#111">1</span>
<span class="t" style="left:1073px;top:566.30px;font:400 15px/15px 'Liberation Sans',sans-serif;color:#111">5</span>
<span class="t" style="left:901.0px;top:1028.88px;font:400 15.5px/15.5px 'Liberation Sans',sans-serif;color:#222;letter-spacing:-0.176px">Page</span>
<span class="t" style="left:978.5px;top:1028.88px;font:400 15.5px/15.5px 'Liberation Sans',sans-serif;color:#222;letter-spacing:0.035px">of 3</span>
<span class="t" style="left:1810.5px;top:1030.88px;font:400 15.5px/15.5px 'Liberation Sans',sans-serif;color:#2a2a2a;letter-spacing:-0.089px">View 1 - 5 of 12</span>
<span class="t" style="left:946.5px;top:1031.15px;font:400 14px/14px 'Liberation Sans',sans-serif;color:#111">1</span>
<span class="t" style="left:1073.0px;top:1030.30px;font:400 15px/15px 'Liberation Sans',sans-serif;color:#111">5</span>
</body></html>
